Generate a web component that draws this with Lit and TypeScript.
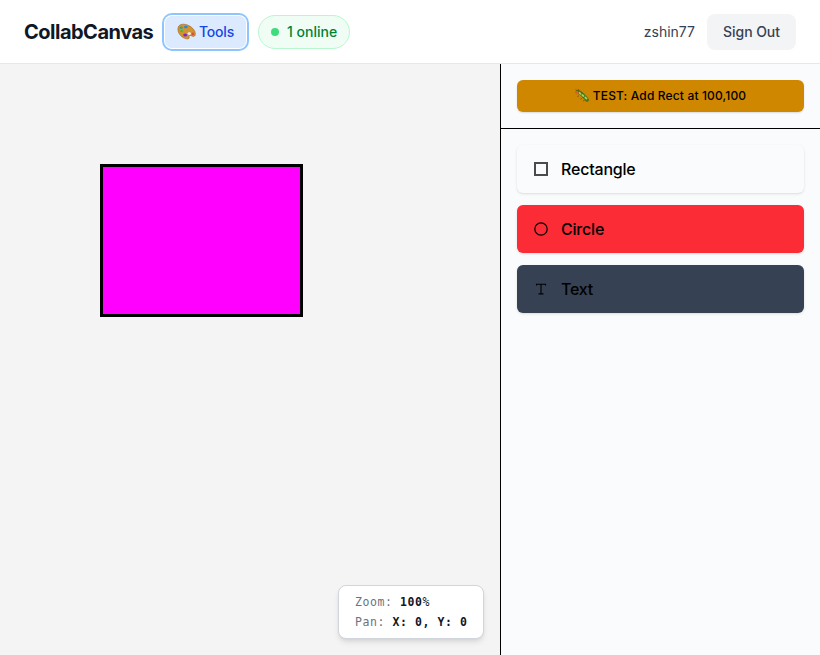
import { LitElement, html, css, svg } from "lit";
import { customElement } from "lit/decorators.js";

const palette = svg`
  <path d="M1 5.200C1.400 1.500 5.500.4 9.800 1.800c4.600 1.500 8.700 5.400 8.500 9.400-.1 1.600-1.100 2.500-2.500 2.100-1.400-.5-2.600-1.300-3.500-.6-.9.800.6 2.100-.5 2.900C9.500 16.600 5.300 14.700 3 11.800 1.500 9.900.7 7.400 1 5.200z" fill="#d29331" stroke="#a96b1d" stroke-width=".7"/>
  <ellipse cx="12.300" cy="10.600" rx="1.700" ry="1.300" fill="#e8eefb"/>
  <ellipse cx="4.200" cy="4.700" rx="1.600" ry="1.200" fill="#2aa3a0"/>
  <ellipse cx="8.800" cy="4" rx="1.900" ry="1.200" fill="#2f86d8"/>
  <ellipse cx="4.600" cy="8" rx="1.500" ry="1.100" fill="#45b53a"/>
  <ellipse cx="8.200" cy="12" rx="2" ry="1.500" fill="#7a2bbd"/>
  <ellipse cx="15.800" cy="10.900" rx="1.200" ry="1.300" fill="#dc4a42"/>`;

const bug = svg`
  <path d="M2.500 2.800C5 3 6.500 4.500 8 6.300s3 2.700 4 4.500" fill="none" stroke="#47701f" stroke-width="3.800" stroke-linecap="round"/>
  <path d="M4.500 3.800l1 1M7.300 6l1.200 1M10.300 8.500l1.200 1.200" stroke="#a5d24f" stroke-width="1.800" stroke-linecap="round"/>
  <circle cx="2" cy="3.800" r="1.700" fill="#d8642a"/>
  <path d="M1.500 1.500L.8.300M3 1.500L3.500 0M3.500 6.500l-.8 1.500M6.500 9l-.6 1.500M9 11l-.3 1.300" stroke="#6b4a18" stroke-width=".8"/>`;

@customElement("app-root")
export class AppRoot extends LitElement {
  static styles = css`
    :host { display: flex; flex-direction: column; height: 655px; overflow: hidden; font-family: Inter, "Liberation Sans", sans-serif; color: #000; }
    * { box-sizing: border-box; }
    button { font: inherit; border: 0; margin: 0; color: inherit; }
    header { height: 64px; flex: none; display: flex; align-items: center; padding: 0 24px; background: #fff; border-bottom: 1px solid #e5e7eb; font-size: 14px; }
    h1 { margin: 0; width: 141px; font-size: 20px; font-weight: 700; line-height: 28px; color: #101828; letter-spacing: -.5px; white-space: nowrap; }
    .tools { width: 81px; height: 32px; padding: 0 0 0 12px; display: flex; align-items: center; gap: 3px; border-radius: 7px; background: #dbeafe; color: #1447e6; font-weight: 500; letter-spacing: -.2px; box-shadow: 0 0 0 1px #fff, 0 0 0 3px #8ec5ff; }
    .tools svg { width: 19px; height: 17px; flex: none; }
    .online { margin-left: 12px; width: 92px; height: 34px; border: 1px solid #b9f8cf; border-radius: 17px; background: #f0fdf4; color: #008236; display: flex; align-items: center; padding-left: 12px; gap: 8px; font-weight: 500; white-space: nowrap; }
    .dot { width: 8px; height: 8px; border-radius: 50%; background: #3edc7c; }
    .user { margin-left: auto; color: #364153; }
    .signout { margin-left: 12px; width: 89px; height: 36px; padding: 0; border-radius: 8px; background: #f3f4f6; color: #364153; font-weight: 500; letter-spacing: -.05px; }
    main { flex: 1; display: flex; min-height: 0; }
    .canvas { position: relative; width: 500px; background: #f4f4f4; }
    .rect { position: absolute; left: 100px; top: 100px; width: 203px; height: 153px; background: #f0f; border: 3px solid #000; }
    .status { position: absolute; right: 16px; bottom: 16px; width: 146px; height: 54px; padding: 6px 16px; border: 1px solid #d1d5dc; border-radius: 8px; background: #fff; box-shadow: 0 4px 6px -1px #0000001a, 0 2px 4px -2px #0000001a; font: 11.5px/20px "DejaVu Sans Mono", monospace; letter-spacing: .58px; color: #6a7282; white-space: pre; }
    .status b, .status .unit { color: #101828; }
    aside { flex: 1; background: #f9fbfd; border-left: 1px solid #000; }
    .test { height: 65px; padding: 16px; border-bottom: 1px solid #000; }
    .test button { width: 100%; height: 32px; padding: 0 0 1px; display: flex; justify-content: center; align-items: center; gap: 4px; background: #d08700; border-radius: 6px; font-size: 12px; font-weight: 500; letter-spacing: .15px; box-shadow: 0 1px 2px #0002; }
    .test svg { width: 14px; height: 13px; }
    .list { display: flex; flex-direction: column; gap: 12px; padding: 16px; }
    .tool { height: 48px; display: flex; align-items: center; gap: 12px; padding: 0 16px; border-radius: 6px; font-size: 16px; font-weight: 500; letter-spacing: -.2px; box-shadow: 0 1px 3px #0000001a, 0 1px 2px -1px #0000001a; background: #f9fbfd; }
    .tool svg { width: 16px; height: 16px; fill: none; stroke: #000; stroke-width: 1.200; }
    .red { background: #fb2c36; }
    .slate { background: #364153; }
  `;

  render() {
    return html`
      <header>
        <h1>CollabCanvas</h1>
        <button class="tools"><svg viewBox="0 0 19 17">${palette}</svg><span>Tools</span></button>
        <div class="online"><i class="dot"></i><span>1 online</span></div>
        <span class="user">zshin77</span>
        <button class="signout">Sign Out</button>
      </header>
      <main>
        <section class="canvas">
          <div class="rect"></div>
          <div class="status"><div>Zoom: <b>100</b><span class="unit">%</span></div><div>Pan: <b>X: 0, Y: 0</b></div></div>
        </section>
        <aside>
          <div class="test"><button><svg viewBox="0 0 14 13">${bug}</svg><span>TEST: Add Rect at 100,100</span></button></div>
          <div class="list">
            <button class="tool"><svg viewBox="0 0 16 16"><path d="M2 2h12v12H2z" stroke="#4a4b4d" stroke-width="2"/></svg>Rectangle</button>
            <button class="tool red"><svg viewBox="0 0 16 16"><circle cx="8" cy="8" r="6.200"/></svg>Circle</button>
            <button class="tool slate"><svg viewBox="0 0 16 16"><path d="M3.500 4.500V3.300h9V4.500M8 3.300v9.400M5.500 12.900h5" stroke-width="1.100"/></svg>Text</button>
          </div>
        </aside>
      </main>`;
  }
}
